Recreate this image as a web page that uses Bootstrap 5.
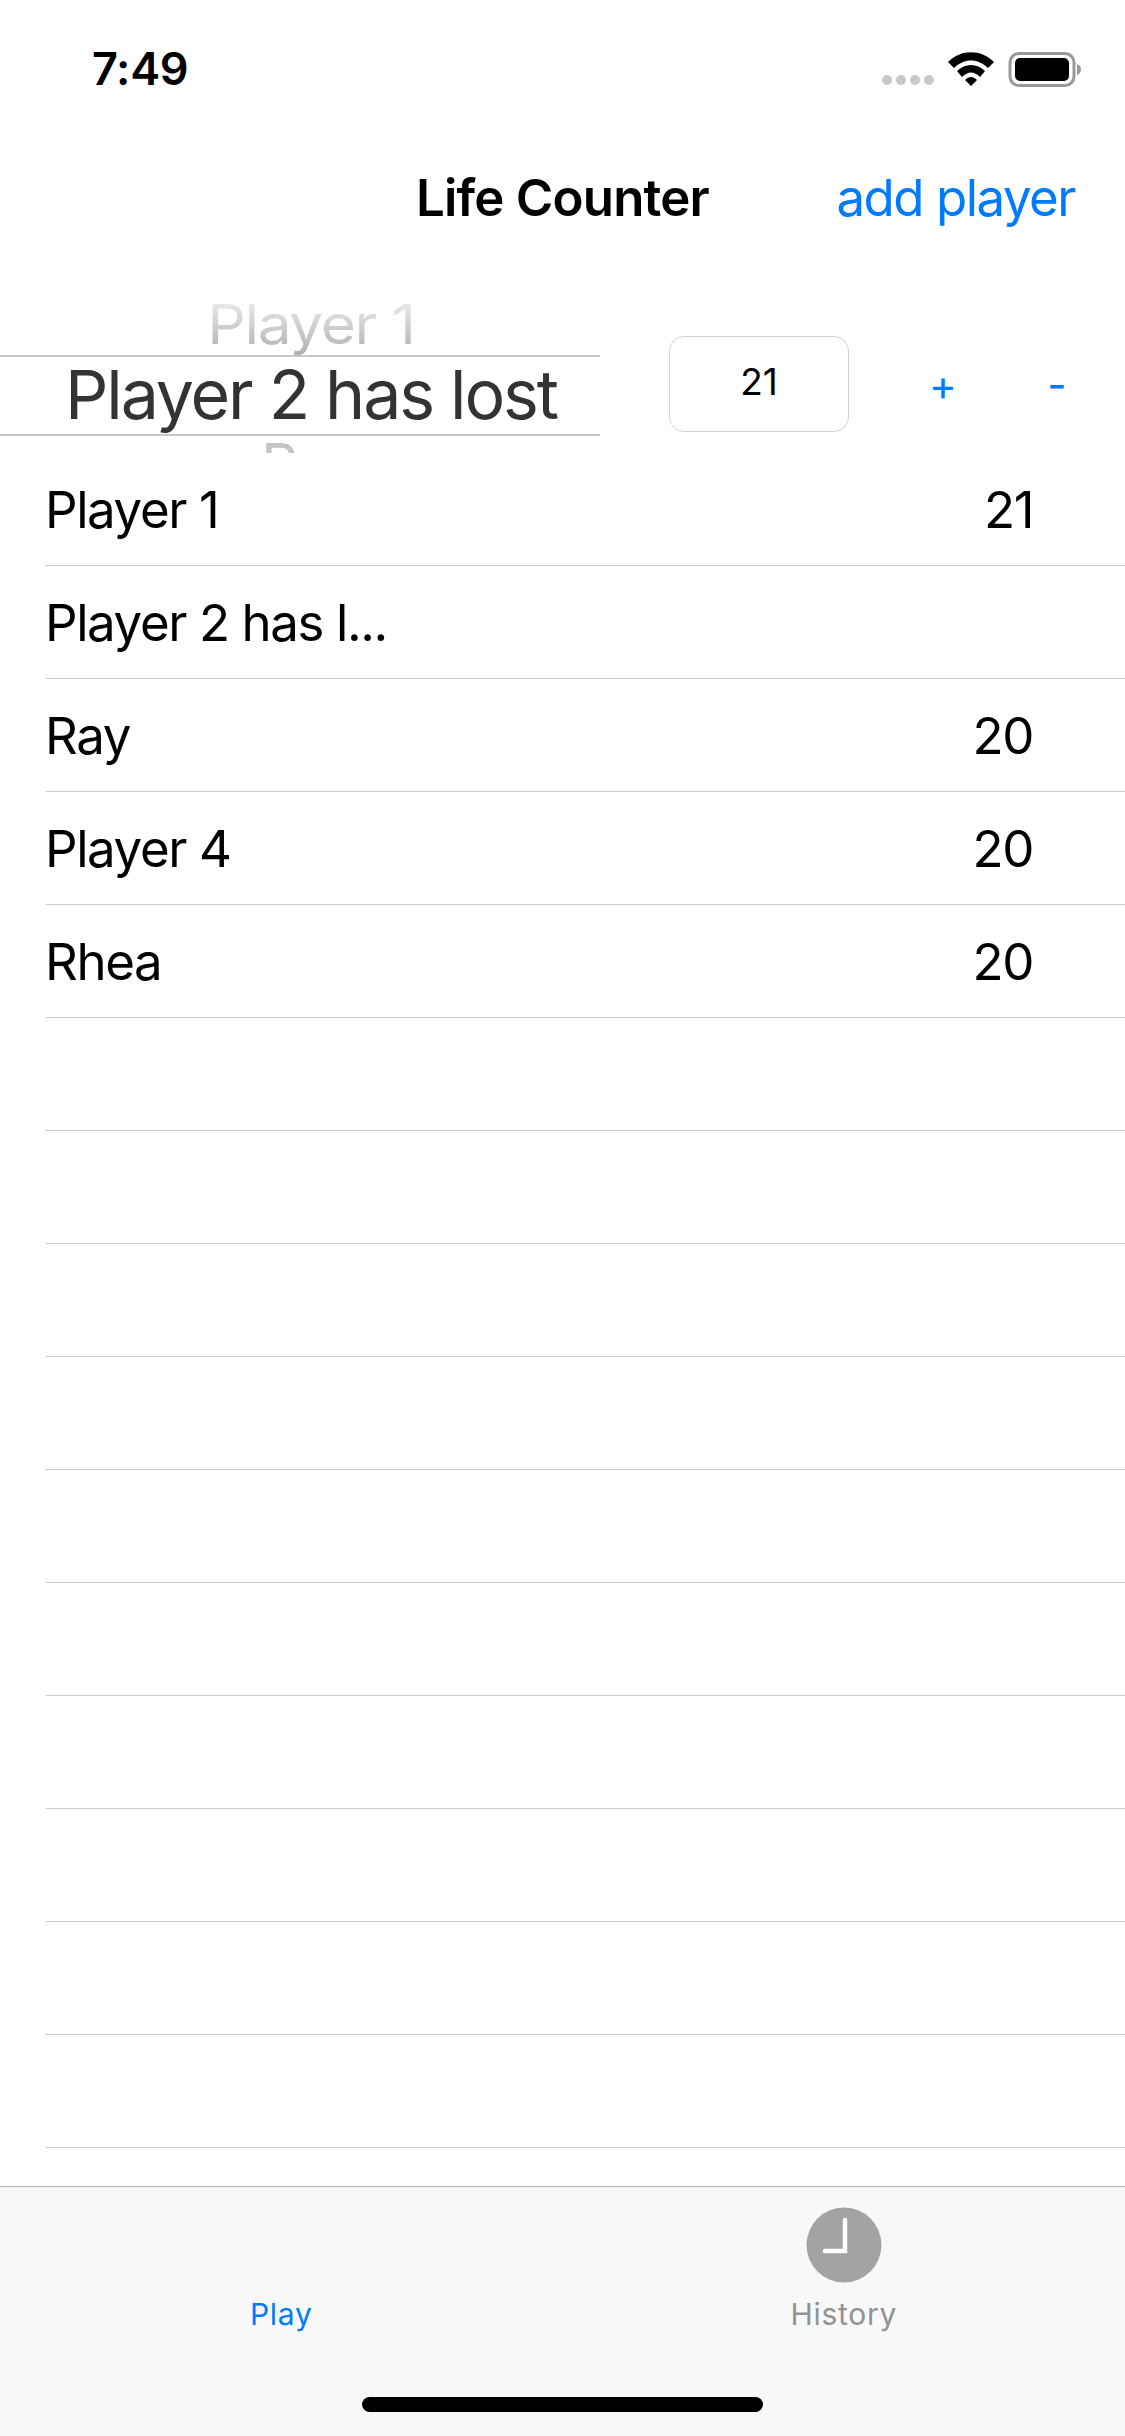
<!DOCTYPE html>
<html lang="en">
<head>
  <meta charset="UTF-8">
  <title>Life Counter</title>
  <meta name="viewport" content="width=device-width, initial-scale=1">
  <link href="https://cdn.jsdelivr.net/npm/bootstrap@5.3.0/dist/css/bootstrap.min.css" rel="stylesheet">
  <style>
    body { width: 1125px; height: 2436px; overflow: hidden; background: #fff; color: #000; font-family: Inter, "Noto Sans", sans-serif; }
    .phone-screen { height: 2436px; }
    .status-row { height: 147px; padding: 0 43px 0 92px; }
    .status-time { font-size: 45px; font-weight: 600; letter-spacing: -0.3px; line-height: 1; margin-top: 46px; }
    .status-icons { margin-top: 52px; width: 200px; height: 36px; }
    .nav-row { height: 100px; position: relative; }
    .nav-title { font-size: 51px; font-weight: 600; letter-spacing: -0.8px; line-height: 1; }
    .nav-action { position: absolute; right: 50px; top: 50%; transform: translateY(-50%); font-size: 51px; letter-spacing: -1.5px; line-height: 1; color: #007aff; text-decoration: none; }
    .controls-row { height: 153px; margin-top: 53px; }
    .wheel { width: 600px; height: 153px; overflow: hidden; }
    .wheel-top { height: 55px; padding-left: 22px; display: flex; justify-content: center; align-items: flex-end; }
    .wheel-top span { font-size: 63px; line-height: 1; letter-spacing: -1.5px; transform: scale(.96,.86); transform-origin: center bottom; margin-bottom: -7px; background: linear-gradient(#eeeeee, #a8a8a8); -webkit-background-clip: text; background-clip: text; color: transparent; padding-bottom: 12px; }
    .wheel-mid { height: 81px; padding: 0 0 4px 22px; border-top: 2px solid #c8c8c8; border-bottom: 2px solid #c8c8c8; font-size: 68px; letter-spacing: -2.1px; color: #333; line-height: 1; }
    .wheel-low { height: 17px; padding-left: 22px; text-align: center; overflow: hidden; }
    .wheel-low span { display: block; font-size: 57px; line-height: 1; color: #c4c4c4; }
    .life-input.form-control { width: 180px; height: 96px; margin-left: 69px; margin-top: 14px; padding: 0 0 4px; border: 1px solid #d0d0d0; border-radius: 15px; font-size: 37px; line-height: 1; color: #000; text-align: center; }
    .step-btn.btn { font-size: 42px; line-height: 1; color: #007aff; padding: 16px 0 0; border: 0; width: 40px; text-align: center; }
    .step-plus { margin-left: 74px; }
    .step-minus { margin-left: 74px; }
    .player-list { height: 1695px; }
    .player-row { height: 113px; margin-left: 46px; padding: 0 92px 0 0; border-bottom: 1px solid #c8c7cc; font-size: 51px; letter-spacing: -1.4px; line-height: 1; }
    .player-row span:first-child { margin-left: -1px; }
    .tab-gap { height: 38px; }
    .tab-bar { height: 250px; background: #f8f8f8; border-top: 1px solid #b2b2b2; position: relative; }
    .tab-item { width: 50%; text-align: center; font-size: 30px; letter-spacing: .7px; line-height: 1; padding-top: 20px; text-decoration: none; }
    .tab-play { color: #007aff; }
    .tab-history { color: #929292; }
    .tab-icon { display: block; width: 76px; height: 76px; margin: 0 auto; }
    .tab-spacer { height: 76px; }
    .tab-label { display: block; margin-top: 16px; }
    .home-bar { position: absolute; left: 362px; top: 210px; width: 401px; height: 15px; background: #000; border-radius: 8px; }
  </style>
</head>
<body>
  <div class="phone-screen d-flex flex-column">
    <div class="status-row d-flex justify-content-between align-items-start">
      <div class="status-time">7:49</div>
      <svg class="status-icons" viewBox="0 0 200 36">
        <g fill="#c9c9c9">
          <circle cx="5" cy="28" r="5"/><circle cx="19" cy="28" r="5"/><circle cx="33" cy="28" r="5"/><circle cx="47" cy="28" r="5"/>
        </g>
        <g fill="#000">
          <path d="M66 10 C79 -3 99 -3 112 10 L106 16 C96 6 82 6 72 16 Z"/>
          <path d="M75 19 C83 11 95 11 103 19 L98 25 C92 19 86 19 80 25 Z"/>
          <path d="M83 28 C87 24 91 24 95 28 L89 34 Z"/>
        </g>
        <rect x="128" y="1.5" width="64" height="32" rx="9" fill="none" stroke="#999" stroke-width="3"/>
        <rect x="133" y="6" width="54" height="23" rx="5" fill="#000"/>
        <path d="M195 12 C198 13 199 15 199 17.5 C199 20 198 22 195 23 Z" fill="#999"/>
      </svg>
    </div>

    <div class="nav-row d-flex align-items-center justify-content-center">
      <div class="nav-title">Life Counter</div>
      <a class="nav-action" href="#">add player</a>
    </div>

    <div class="controls-row d-flex align-items-center">
      <div class="wheel flex-shrink-0">
        <div class="wheel-top"><span>Player 1</span></div>
        <div class="wheel-mid d-flex align-items-center justify-content-center">Player 2 has lost</div>
        <div class="wheel-low"><span>Ray</span></div>
      </div>
      <input class="life-input form-control" type="text" value="21">
      <button type="button" class="step-btn step-plus btn">+</button>
      <button type="button" class="step-btn step-minus btn">-</button>
    </div>

    <div class="player-list">
      <div class="player-row d-flex align-items-center justify-content-between"><span>Player 1</span><span>21</span></div>
      <div class="player-row d-flex align-items-center justify-content-between"><span>Player 2 has l...</span><span></span></div>
      <div class="player-row d-flex align-items-center justify-content-between"><span>Ray</span><span>20</span></div>
      <div class="player-row d-flex align-items-center justify-content-between"><span>Player 4</span><span>20</span></div>
      <div class="player-row d-flex align-items-center justify-content-between"><span>Rhea</span><span>20</span></div>
      <div class="player-row"></div>
      <div class="player-row"></div>
      <div class="player-row"></div>
      <div class="player-row"></div>
      <div class="player-row"></div>
      <div class="player-row"></div>
      <div class="player-row"></div>
      <div class="player-row"></div>
      <div class="player-row"></div>
      <div class="player-row"></div>
    </div>
    <div class="tab-gap"></div>

    <div class="tab-bar d-flex">
      <a class="tab-item tab-play" href="#"><span class="tab-spacer d-block"></span><span class="tab-label">Play</span></a>
      <a class="tab-item tab-history" href="#">
        <svg class="tab-icon" viewBox="0 0 76 76">
          <circle cx="38" cy="38" r="37.5" fill="#a3a3a3"/>
          <path d="M39 13 V44 H19" fill="none" stroke="#fff" stroke-width="4.5" stroke-linecap="round"/>
        </svg>
        <span class="tab-label">History</span>
      </a>
      <div class="home-bar"></div>
    </div>
  </div>
</body>
</html>
